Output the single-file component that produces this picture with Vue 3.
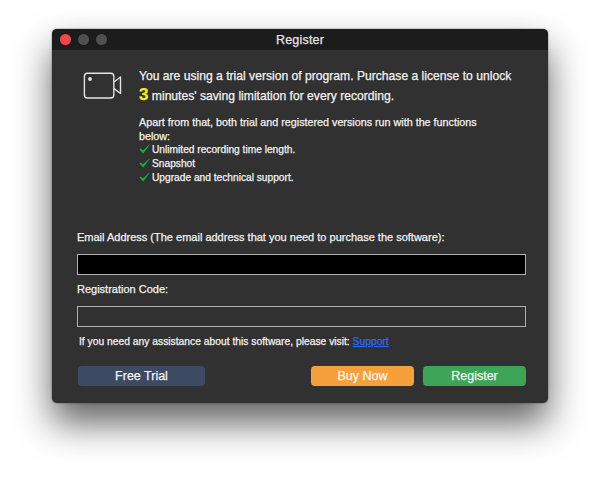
<template>
  <div class="page">
    <div class="window">
      <div class="titlebar">
        <div class="lights">
          <span class="light red"></span>
          <span class="light"></span>
          <span class="light"></span>
        </div>
        <span class="title">Register</span>
      </div>
      <div class="content">
        <div class="info">
          <svg class="camera" width="40" height="30" viewBox="0 0 40 30" fill="none" stroke="#e4e4e4" stroke-width="1.4">
            <rect x="1.4" y="3.2" width="29.4" height="24.8" rx="3" />
            <circle cx="7" cy="9" r="1.9" fill="#e4e4e4" stroke="none" />
            <path d="M31 12 L37.5 7 V23.5 L31 18.5" stroke-linejoin="round" />
          </svg>
          <div class="message">
            <p class="lead">You are using a trial version of program. Purchase a license to unlock</p>
            <p class="lead"><span class="num">3</span> minutes' saving limitation for every recording.</p>
            <p class="apart">Apart from that, both trial and registered versions run with the functions below:</p>
            <ul class="features">
              <li v-for="item in features" :key="item">
                <svg class="check" width="11" height="10" viewBox="0 0 11 10">
                  <path d="M0.4 5.6 L1.9 4.4 L3.9 6.4 L10.4 0.4 L10.8 0.8 L4.2 9.6 Z" fill="#0cb53a" />
                </svg>{{ item }}
              </li>
            </ul>
          </div>
        </div>
        <div class="form">
          <label class="label">Email Address (The email address that you need to purchase the software):</label>
          <div class="input focused"></div>
          <label class="label code">Registration Code:</label>
          <div class="input"></div>
          <p class="help">If you need any assistance about this software, please visit: <a href="#" class="link">Support</a></p>
        </div>
        <div class="buttons">
          <button class="btn trial">Free Trial</button>
          <div class="right">
            <button class="btn buy">Buy Now</button>
            <button class="btn register">Register</button>
          </div>
        </div>
      </div>
    </div>
  </div>
</template>
<script setup>
const features = [
  "Unlimited recording time length.",
  "Snapshot",
  "Upgrade and technical support.",
];
</script>
<style>
html,
body {
  margin: 0;
  background: #fff;
}
</style>
<style scoped>
.page {
  box-sizing: border-box;
  height: 477px;
  padding: 29px 0 0 52px;
  overflow: hidden;
}
.window {
  box-sizing: border-box;
  width: 496px;
  height: 374px;
  background: #313131;
  border-radius: 5px;
  box-shadow: 0 20px 36px rgba(0, 0, 0, 0.62), 0 0 2px rgba(0, 0, 0, 0.5);
  font-family: "Liberation Sans", Arial, sans-serif;
  color: #f2f2f2;
  overflow: hidden;
  -webkit-text-stroke: 0.25px;
}
.titlebar {
  position: relative;
  height: 21px;
  padding-top: 1px;
  box-sizing: border-box;
  background: #1c1c1c;
  display: flex;
  align-items: center;
  justify-content: center;
}
.lights {
  position: absolute;
  left: 8px;
  top: 5px;
  display: flex;
  gap: 7px;
}
.light {
  width: 11px;
  height: 11px;
  border-radius: 50%;
  background: #505050;
}
.light.red {
  background: #f5474b;
}
.title {
  font-size: 12.5px;
  letter-spacing: 0.2px;
  color: #e6e6e6;
}
.content {
  padding: 0 22px 0 25px;
}
.info {
  display: flex;
  padding-top: 17px;
  height: 156px;
}
.camera {
  margin: 3px 0 0 6px;
  flex-shrink: 0;
}
.message {
  margin-left: 16px;
  flex: 1;
}
p {
  margin: 0;
}
.lead {
  font-size: 12.13px;
  line-height: 18.5px;
}
.num {
  color: #f2e92b;
  font-size: 17px;
  font-weight: bold;
}
.apart {
  margin-top: 10px;
  font-size: 10.75px;
  line-height: 14px;
  width: 345px;
}
.features {
  list-style: none;
  margin: 0;
  padding: 0;
  font-size: 10.2px;
  line-height: 14px;
}
.features li {
  height: 14px;
}
.check {
  margin-right: 2px;
  vertical-align: -1px;
}
.form {
  padding-top: 7px;
}
.label {
  display: block;
  font-size: 11px;
  line-height: 14px;
}
.input {
  box-sizing: border-box;
  height: 21px;
  margin-top: 10px;
  border: 1px solid #b0b0b0;
  background: #313131;
}
.input.focused {
  background: #000;
}
.label.code {
  margin-top: 7px;
}
.help {
  margin: 8px 0 0 2px;
  font-size: 10.3px;
  line-height: 14px;
}
.link {
  color: #2d6cf6;
}
.buttons {
  display: flex;
  justify-content: space-between;
  margin-top: 17px;
  padding-left: 1px;
}
.right {
  display: flex;
  gap: 9px;
}
.btn {
  width: 103px;
  height: 20px;
  padding: 0;
  border: none;
  border-radius: 4px;
  font-family: inherit;
  font-size: 12.5px;
  color: #f4f4f4;
  -webkit-text-stroke: 0.25px;
}
.trial {
  width: 127px;
  background: #3c4a63;
}
.buy {
  background: #f6a03c;
}
.register {
  background: #3ea558;
}
</style>
